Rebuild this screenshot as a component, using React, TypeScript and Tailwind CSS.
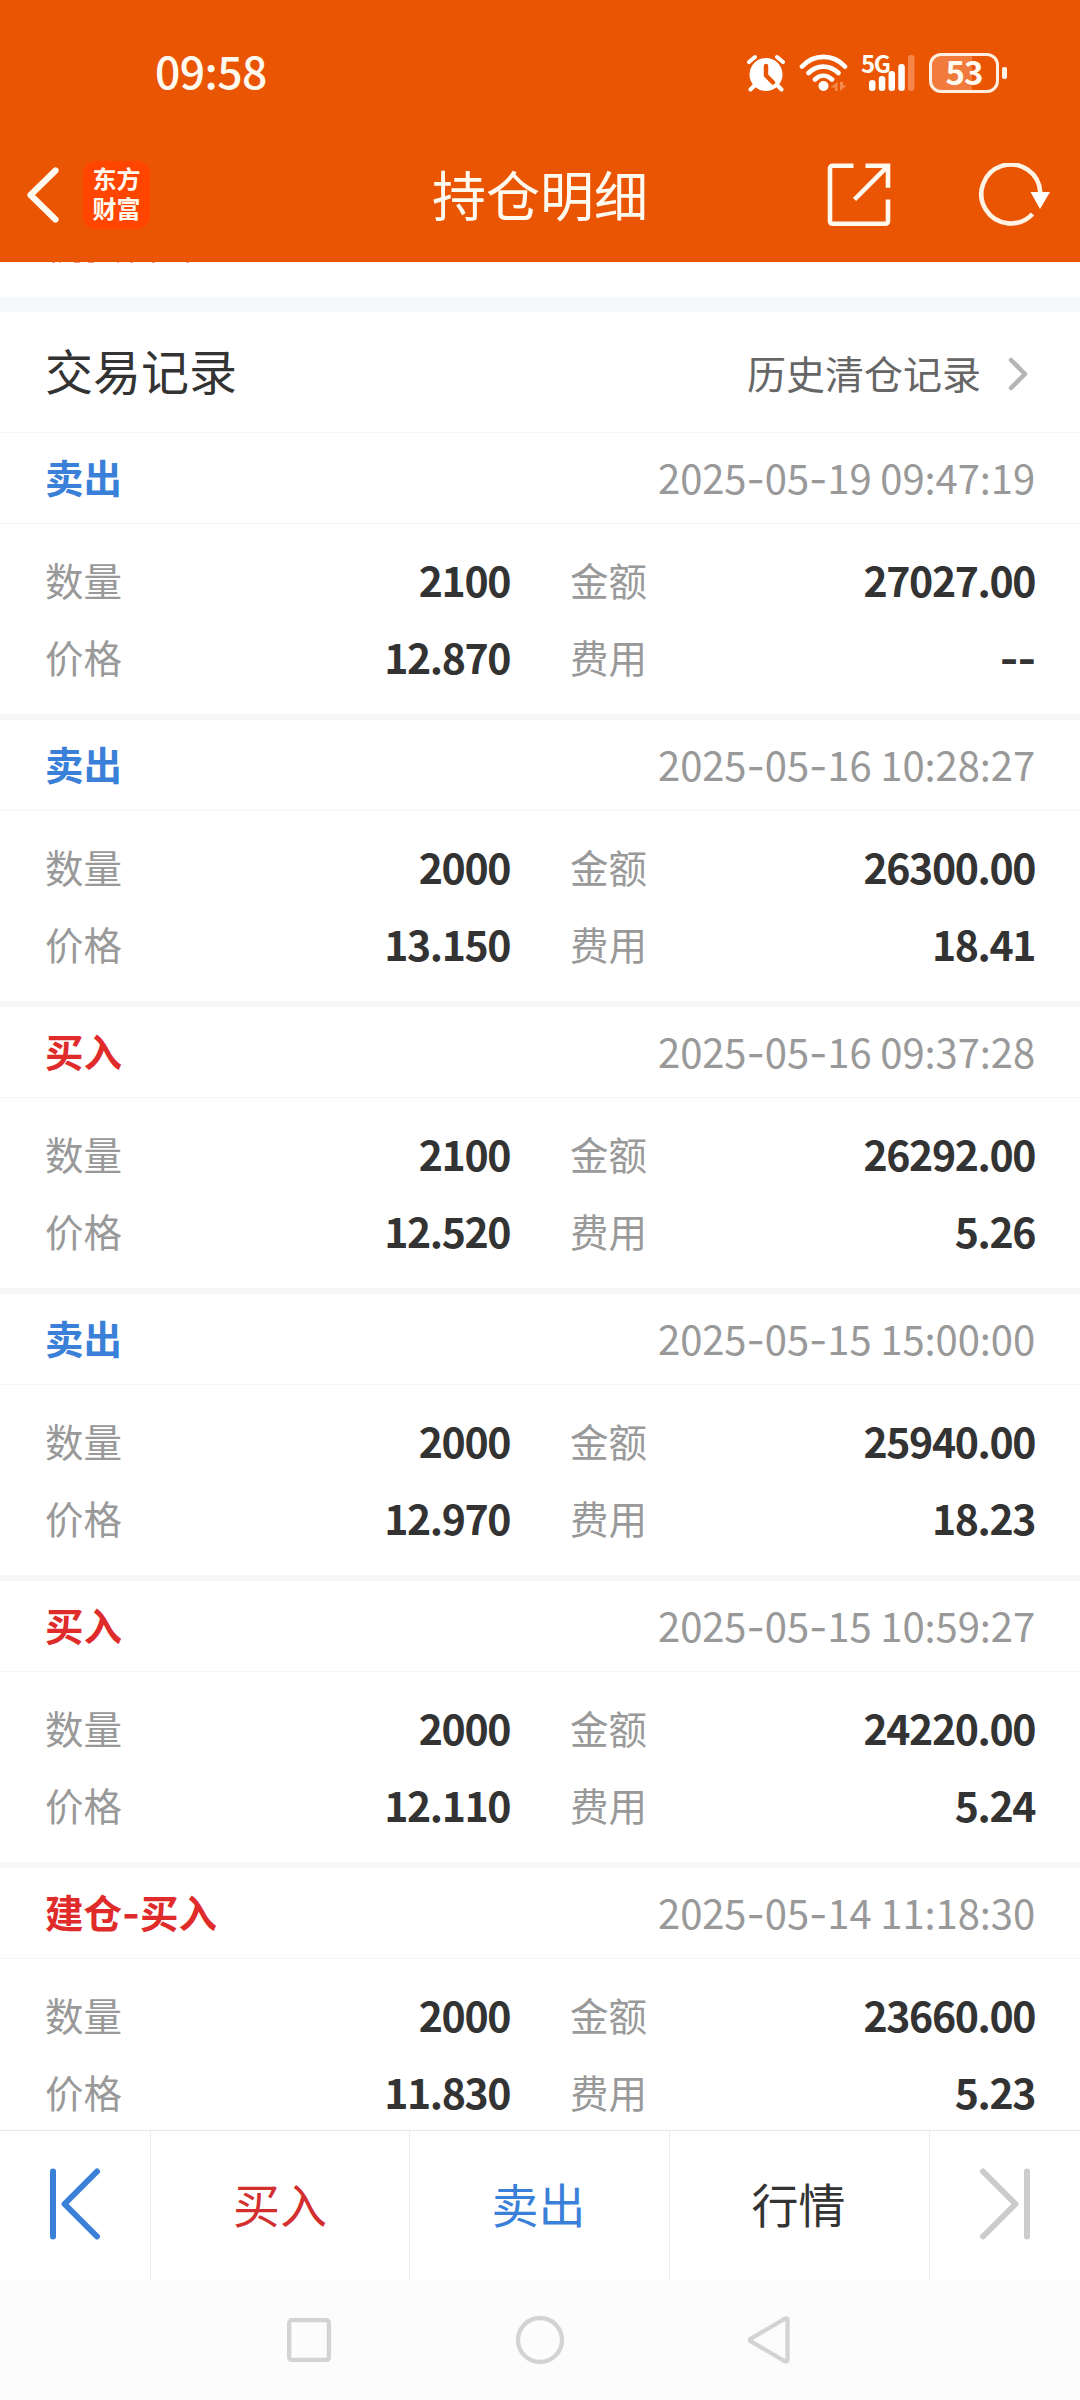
import React from "react";

type Trade = {
  kind: string;
  buy: boolean;
  time: string;
  qty: string;
  amount: string;
  price: string;
  fee: string;
};

const trades: Trade[] = [
  { kind: "卖出", buy: false, time: "2025-05-19 09:47:19", qty: "2100", amount: "27027.00", price: "12.870", fee: "--" },
  { kind: "卖出", buy: false, time: "2025-05-16 10:28:27", qty: "2000", amount: "26300.00", price: "13.150", fee: "18.41" },
  { kind: "买入", buy: true, time: "2025-05-16 09:37:28", qty: "2100", amount: "26292.00", price: "12.520", fee: "5.26" },
  { kind: "卖出", buy: false, time: "2025-05-15 15:00:00", qty: "2000", amount: "25940.00", price: "12.970", fee: "18.23" },
  { kind: "买入", buy: true, time: "2025-05-15 10:59:27", qty: "2000", amount: "24220.00", price: "12.110", fee: "5.24" },
  { kind: "建仓-买入", buy: true, time: "2025-05-14 11:18:30", qty: "2000", amount: "23660.00", price: "11.830", fee: "5.23" },
];

/** Sets hyphens in a face with a wider, higher dash. */
function Dashed({ text }: { text: string }) {
  return (
    <>
      {text.split(/(-+)/).map((part, i) =>
        part.startsWith("-") ? (
          <span key={i} className="font-['Inter',sans-serif] leading-none">
            {part}
          </span>
        ) : (
          part
        ),
      )}
    </>
  );
}

function StatusBar() {
  return (
    <div className="flex h-[146px] items-center justify-between pl-[155px] pr-[73px]">
      <span className="pb-[6px] text-[44.500px] font-medium leading-none tracking-[-0.6px]">09:58</span>
      <div className="flex items-center">
        <svg className="h-[38px] w-10" viewBox="0 0 40 38" fill="none">
          <circle cx="20" cy="20.5" r="16.5" fill="#fff" />
          <path d="M3 8 9 3M37 8 31 3M8 32 4.500 35.500M32 32l3.500 3.500" stroke="#fff" strokeWidth="4" strokeLinecap="round" />
          <path d="M20 12v9.500l7 7" stroke="#ea5504" strokeWidth="4.500" strokeLinecap="round" strokeLinejoin="round" />
        </svg>
        <svg className="ml-[13px] h-[38px] w-[49px]" viewBox="0 0 49 38" fill="none">
          <path d="M3 12.500C15-.3 34-.3 46 12.500M9.500 19c8.500-8.500 21-8.500 30 0M16 25.500c5-5 11.500-5 17 0" stroke="#fff" strokeWidth="4.600" strokeLinecap="round" />
          <circle cx="24.500" cy="32" r="5" fill="#fff" />
          <path d="M38.500 28v9h-2.500v-3.500h-4.500zM41 28v9l6.500-5.500H44V28z" fill="#f58a4d" />
        </svg>
        <div className="relative ml-[13px] h-[38px] w-[55px]">
          <span className="absolute left-0 top-0 text-[24px] font-bold leading-[18px] tracking-[-1.500px]">5G</span>
          <svg className="h-[38px] w-[55px]" viewBox="0 0 55 38">
            <g fill="#fff">
              <rect x="8" y="26" width="6.500" height="11" rx="3" />
              <rect x="17.800" y="22" width="6.500" height="15" rx="3" />
              <rect x="27.500" y="17" width="6.500" height="20" rx="3" />
              <rect x="37.300" y="10" width="6.500" height="27" rx="3" />
            </g>
            <rect x="47" y="1" width="6.500" height="36" rx="3" fill="#f5854a" />
          </svg>
        </div>
        <div className="ml-[13px] flex items-center">
          <div className="flex h-10 w-[70px] items-center justify-center rounded-[12px] border-[3px] border-[#ffefe0] bg-[linear-gradient(90deg,#f07b3c_62%,transparent_62%)]">
            <span className="pb-[3px] text-[33px] font-bold leading-none tracking-[-1px]">53</span>
          </div>
          <div className="ml-[3px] h-3 w-[5px] rounded-[2px] bg-[#fff4ea]" />
        </div>
      </div>
    </div>
  );
}

function TitleBar() {
  return (
    <div className="grid h-[116px] grid-cols-[1fr_auto_1fr] items-center pb-[18px]">
      <div className="flex items-center pl-[25px]">
        <svg className="h-[60px] w-9" viewBox="0 0 36 60" fill="none">
          <path d="M30.500 5.500 5.500 30l25 24.500" stroke="#fffaf0" strokeWidth="6.300" strokeLinecap="round" strokeLinejoin="round" />
        </svg>
        <div className="ml-[22px] flex h-[68px] w-[67px] items-center justify-center rounded-[13px] bg-[#ff4500] pb-[5px]">
          <span className="text-center text-[24px] font-bold leading-[30px]">
            东方
            <br />
            财富
          </span>
        </div>
      </div>
      <h1 className="pb-[3px] text-[54px] leading-[64px]">持仓明细</h1>
      <div className="flex items-center justify-end pr-[29px]">
        <svg className="h-16 w-16" viewBox="0 0 64 64" fill="none" stroke="#fff8ec" strokeWidth="4.600">
          <path d="M26.500 2.800H5.500a2.500 2.500 0 0 0-2.500 2.500v53a2.500 2.500 0 0 0 2.500 2.500h53a2.500 2.500 0 0 0 2.500-2.500V36.500" />
          <path d="M38.500 2.800H61v22M61 2.800 27.500 36.500" />
        </svg>
        <svg className="ml-[87px] h-16 w-[73px]" viewBox="0 0 73 64" fill="none">
          <path d="M62.300 29.500A29.500 29.500 0 1 0 54.500 51" stroke="#fff3e6" strokeWidth="4.600" />
          <path d="M52.500 29h19.500L62 46z" fill="#fff" />
        </svg>
      </div>
    </div>
  );
}

function Field({ label, value }: { label: string; value: string }) {
  return (
    <div className="flex h-[77px] items-center justify-between">
      <span className="text-[38.500px] text-[#999]">{label}</span>
      <span className="text-[41px] font-bold tracking-[-1.400px] text-[#333]">
        <Dashed text={value} />
      </span>
    </div>
  );
}

function TradeCard({ trade }: { trade: Trade }) {
  return (
    <article className="h-[287px] shrink-0 border-b-[6px] border-[#f6f7f9]">
      <div className="flex h-[91px] items-center justify-between border-b border-[#f5f5f5] px-[45px] pb-[3px]">
        <span className={trade.buy ? "text-[38.500px] font-bold text-[#e02b2b]" : "text-[38.500px] font-bold text-[#3a80d9]"}>
          <Dashed text={trade.kind} />
        </span>
        <span className="text-[40px] tracking-[-0.1px] text-[#999]">
          <Dashed text={trade.time} />
        </span>
      </div>
      <div className="grid grid-cols-[465px_465px] gap-x-[60px] px-[45px] pt-[17px]">
        <Field label="数量" value={trade.qty} />
        <Field label="金额" value={trade.amount} />
        <Field label="价格" value={trade.price} />
        <Field label="费用" value={trade.fee} />
      </div>
    </article>
  );
}

function ActionBar() {
  return (
    <div className="grid h-[150px] shrink-0 grid-cols-[151px_259px_260px_260px_150px] border-t border-[#e8e8e8] bg-white text-[47px] [&>*]:flex [&>*]:items-center [&>*]:justify-center [&>*]:pb-[4px]">
      <button className="border-r border-[#ececec]">
        <svg className="h-[72px] w-[52px]" viewBox="0 0 52 72" fill="none" stroke="#3a80d9" strokeWidth="6" strokeLinecap="round" strokeLinejoin="round">
          <path d="M4 3.500v65M48 3.500 15.500 36 48 68.500" />
        </svg>
      </button>
      <button className="border-r border-[#ececec] text-[#d32f2f]">买入</button>
      <button className="border-r border-[#ececec] pr-[2px] text-[#3a80d9]">卖出</button>
      <button className="border-r border-[#ececec] pr-[2px] text-[#333]">行情</button>
      <button>
        <svg className="h-[72px] w-[52px]" viewBox="0 0 52 72" fill="none" stroke="#ccc" strokeWidth="6" strokeLinecap="round" strokeLinejoin="round">
          <path d="M48 3.500v65M4 3.500 36.500 36 4 68.500" />
        </svg>
      </button>
    </div>
  );
}

function SystemNav() {
  return (
    <div className="flex h-[120px] shrink-0 items-center justify-center gap-[179px] bg-[#fcfcfc]">
      <svg className="h-[52px] w-[52px]" viewBox="0 0 52 52" fill="none" stroke="#d3d3d3" strokeWidth="4.300">
        <rect x="6.200" y="6.200" width="39.700" height="39.700" rx="2.500" />
      </svg>
      <svg className="h-[52px] w-[52px]" viewBox="0 0 52 52" fill="none" stroke="#d3d3d3" strokeWidth="4.300">
        <circle cx="26" cy="26" r="22" />
      </svg>
      <svg className="h-[52px] w-[52px]" viewBox="0 0 52 52" fill="none" stroke="#d3d3d3" strokeWidth="4.300" strokeLinejoin="round">
        <path d="M41 4.500a1.500 1.500 0 0 1 1.500 1.500v40a1.500 1.500 0 0 1-2.400 1.300L5.500 27.200a1.500 1.500 0 0 1 0-2.400L40.100 4.700z" />
      </svg>
    </div>
  );
}

export default function App() {
  return (
    <div className="flex h-[2400px] w-[1080px] flex-col overflow-hidden bg-white font-['Noto_Sans_CJK_SC',sans-serif]">
      <header className="h-[262px] shrink-0 bg-[#ea5504] text-[#fffaf0]">
        <StatusBar />
        <TitleBar />
      </header>
      <main className="flex min-h-0 flex-1 flex-col overflow-hidden">
        {/* Lower edge of the row scrolled under the header */}
        <div className="h-[35px] shrink-0">
          <svg className="block h-px w-[200px]" viewBox="0 0 200 1" fill="none">
            <path d="M52 .5h3M59 .5h1.500M74 .5h6M88 .5h6M117 .5h2M130 .5h3M152 .5h3M186 .5h3" stroke="#e89a8c" strokeWidth="1" />
          </svg>
        </div>
        <div className="h-[15px] shrink-0 bg-[#f6f8fa]" />
        <div className="flex h-[121px] shrink-0 items-center justify-between border-b border-[#f5f5f5] px-[45px]">
          <h2 className="pb-[6px] text-[48px] text-[#333]">交易记录</h2>
          <div className="flex items-center pr-[5px] pt-[4px]">
            <span className="pb-[3px] text-[39px] text-[#666]">历史清仓记录</span>
            <svg className="ml-[25px] h-9 w-6" viewBox="0 0 24 36" fill="none">
              <path d="M5 4l14 14L5 32" stroke="#b5b5b5" strokeWidth="4.500" strokeLinecap="round" strokeLinejoin="round" />
            </svg>
          </div>
        </div>
        {trades.map((t) => (
          <TradeCard key={t.time} trade={t} />
        ))}
      </main>
      <ActionBar />
      <SystemNav />
    </div>
  );
}
